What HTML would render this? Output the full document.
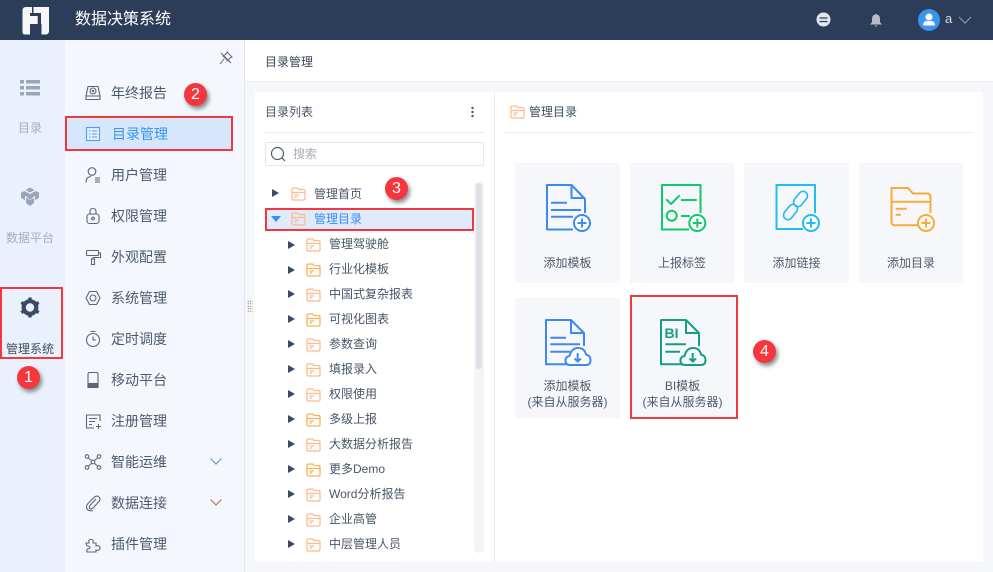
<!DOCTYPE html>
<html lang="zh"><head><meta charset="utf-8"><title>数据决策系统</title>
<style>
*{box-sizing:border-box;margin:0;padding:0}
html,body{width:993px;height:572px;overflow:hidden;background:#f6f7fa}
body{position:relative;font-family:"Liberation Sans","Noto Sans CJK SC",sans-serif;color:#4a5568}
.a{position:absolute}
.t{position:absolute;white-space:nowrap;line-height:16px;font-size:12px;color:#4a5568}
.m{position:absolute;left:111px;white-space:nowrap;font-size:14px;line-height:18px;color:#4d5a6e}
.mi{position:absolute;left:84px;width:18px;height:18px;fill:none;stroke:#5a6678;stroke-width:1.1}
.tri{position:absolute;width:0;height:0;border-left:7px solid #3a4a68;border-top:4.5px solid transparent;border-bottom:4.5px solid transparent}
.fd{position:absolute;width:15px;height:14px;fill:none;stroke:#fdbb8e;stroke-width:1.3}
.o{stroke:#fcb255}
.card{position:absolute;width:105px;height:120px;background:#f6f7fa}
.card svg{position:absolute;left:0;top:0;width:105px;height:120px;fill:none;stroke-width:2}
.card div{position:absolute;left:0;width:100%;text-align:center;font-size:12px;line-height:16px;color:#4d5a6e;white-space:nowrap}
.red{position:absolute;border:2px solid #f0383f}
.badge{position:absolute;width:23px;height:23px;border-radius:50%;background:#f5373d;color:#fff;font-size:16px;line-height:23px;text-align:center;box-shadow:2px 3px 4px rgba(0,0,0,.45)}
</style></head><body>
<svg width="0" height="0" style="position:absolute"><symbol id="f" viewBox="0 0 15 14"><path d="M1 2.500Q1 1 2.500 1H6.500L8 2.500H12.500Q14 2.500 14 4V11.500Q14 13 12.500 13H2.500Q1 13 1 11.500ZM1 5.500H14M3.500 8H8M3.500 10H6"/></symbol></svg>

<div class="a" style="left:0;top:0;width:993px;height:40px;background:#2c3d59"></div>
<svg class="a" style="left:15px;top:2px" width="40" height="36" viewBox="15 2 40 36"><path d="M26 7H32V13H41.500V24H30V34.500H25Q22.500 34.500 22.500 32V10.500Q22.500 7 26 7ZM33.500 7H49V31Q49 34.500 45.500 34.500H41.500V24H41.500V13H33.500Z" fill="#f6f6f6"/><path d="M30 13H41V24H37.700V16H30Z" fill="#2c3d59"/></svg>
<div class="t" style="left:75px;top:11px;font-size:16px;line-height:18px;color:#fff">数据决策系统</div>
<svg class="a" style="left:816px;top:12px" width="15" height="15" viewBox="0 0 15 15"><circle cx="7.500" cy="7.500" r="7" fill="#e3e6ec"/><path d="M3.500 6H11.500M3.500 9.500H11.500" stroke="#2c3d59" stroke-width="1.300"/></svg>
<svg class="a" style="left:869px;top:13px" width="14" height="15" viewBox="0 0 14 15"><path d="M7 1Q11 2 11 6V9L13 11.500H1L3 9V6Q3 2 7 1ZM5.500 12.500H8.500L7 14Z" fill="#b6bcc6"/></svg>
<svg class="a" style="left:918px;top:9px" width="22" height="22" viewBox="0 0 22 22"><circle cx="11" cy="11" r="11" fill="#3a95ee"/><circle cx="11" cy="8" r="3.500" fill="#fff"/><path d="M5 16.500Q5 12 9 12H13Q17 12 17 16.500Z" fill="#fff"/></svg>
<div class="t" style="left:945px;top:11px;font-size:13px;color:#d6dae2">a</div>
<svg class="a" style="left:958px;top:15px" width="14" height="10" viewBox="0 0 14 10"><path d="M1 2L7 8L13 2" fill="none" stroke="#8e99aa" stroke-width="1.200"/></svg>

<div class="a" style="left:0;top:40px;width:65px;height:532px;background:#ebf1fc"></div>
<div class="a" style="left:65px;top:40px;width:179px;height:532px;background:#f4f7fe"></div>
<div class="a" style="left:244px;top:40px;width:1px;height:532px;background:#e3e6ec"></div>

<svg class="a" style="left:20px;top:80px" width="20" height="16" viewBox="0 0 20 16" fill="#9aa5b8"><rect width="4" height="3.500"/><rect x="6" width="14" height="3.500"/><rect y="6" width="4" height="3.500"/><rect x="6" y="6" width="14" height="3.500"/><rect y="12" width="4" height="3.500"/><rect x="6" y="12" width="14" height="3.500"/></svg>
<div class="t" style="left:18px;top:120px;color:#a3adbc">目录</div>
<svg class="a" style="left:20px;top:187px" width="20" height="21" viewBox="0 0 20 21" fill="#9aa5b8"><path d="M10 0.500L14.500 3L10 5.500L5.500 3ZM1 5.500L4.500 4L9 6.500V11L5 9V13L1 11ZM19 5.500L15.500 4L11 6.500V11L15 9V13L19 11ZM6 11L10 13L14 11V16L10 19L6 16Z"/><circle cx="10" cy="9.500" r="2.800"/></svg>
<div class="t" style="left:6px;top:230px;color:#a3adbc">数据平台</div>
<svg class="a" style="left:20px;top:297px" width="20" height="21" viewBox="0 0 20 21"><circle cx="10" cy="10.500" r="6.300" fill="none" stroke="#3a4a64" stroke-width="4.200"/><g stroke="#3a4a64" stroke-width="3.400"><path d="M10 0.500V3.500M10 17.500V20.500M1.300 5.500L4 7M16 14L18.700 15.500M1.300 15.500L4 14M16 7L18.700 5.500"/></g></svg>
<div class="t" style="left:6px;top:341px;color:#3f4c62">管理系统</div>
<div class="red" style="left:0;top:287px;width:63px;height:72px"></div>

<svg class="a" style="left:219px;top:51px" width="14" height="14" viewBox="0 0 14 14" fill="none" stroke="#5e6a7c" stroke-width="1"><path d="M8 1L13 6L11 7L9 10L4 5L7 3ZM5 8L1 13M2 2L12 12"/></svg>

<div class="a" style="left:65px;top:116px;width:168px;height:35px;background:#d6e6fb;border:2px solid #f0383f"></div>

<svg class="mi" style="top:84px" viewBox="0 0 18 18"><path d="M4 2.500H14L16 12V15.500H2V12ZM2.500 12H15.500"/><circle cx="9" cy="7" r="3"/><circle cx="9" cy="7" r=".7"/></svg>
<div class="m" style="top:84px">年终报告</div>
<svg class="mi" style="top:125px;stroke:#55a0ee" viewBox="0 0 18 18"><rect x="2.500" y="2.500" width="13" height="13" fill="#e3eefc"/><path d="M5 6H6.500M8 6H13M5 9H6.500M8 9H13M5 12H6.500M8 12H13"/></svg>
<div class="m" style="top:125px;color:#3a95f0;left:112px">目录管理</div>
<svg class="mi" style="top:166px" viewBox="0 0 18 18"><circle cx="8" cy="5.500" r="3.800"/><path d="M2 16.500Q2 11 7 10.500M11 12H16M11 14H16M11 16H16"/></svg>
<div class="m" style="top:166px">用户管理</div>
<svg class="mi" style="top:207px" viewBox="0 0 18 18"><rect x="3" y="7" width="12" height="9.500" rx="2.500"/><path d="M6 7V4.500Q6 1.500 9 1.500Q12 1.500 12 4.500V7"/><circle cx="9" cy="11.500" r="1.300"/></svg>
<div class="m" style="top:207px">权限管理</div>
<svg class="mi" style="top:248px" viewBox="0 0 18 18"><rect x="2.500" y="2.500" width="12" height="5" rx="1"/><path d="M14.500 5H16.500V9.500H9V11"/><rect x="7.500" y="11" width="3" height="5.500"/></svg>
<div class="m" style="top:248px">外观配置</div>
<svg class="mi" style="top:289px" viewBox="0 0 18 18"><path d="M5.500 2.500H12.500L16 9L12.500 15.500H5.500L2 9Z" stroke-linejoin="round"/><circle cx="9" cy="9" r="3"/></svg>
<div class="m" style="top:289px">系统管理</div>
<svg class="mi" style="top:330px" viewBox="0 0 18 18"><circle cx="9" cy="10" r="6.500"/><path d="M6.500 1.500H11.500M9 6.500V10H12"/></svg>
<div class="m" style="top:330px">定时调度</div>
<svg class="mi" style="top:371px" viewBox="0 0 18 18"><rect x="4" y="1.500" width="10" height="15" rx="1.500"/><rect x="4" y="12.500" width="10" height="4" fill="#5a6678"/></svg>
<div class="m" style="top:371px">移动平台</div>
<svg class="mi" style="top:412px" viewBox="0 0 18 18"><path d="M16 9V3H2.500V16H10M5 6.500H13M5 9.500H11M5 12.500H8M12 14.500H17M14.500 12V17"/></svg>
<div class="m" style="top:412px">注册管理</div>
<svg class="mi" style="top:453px" viewBox="0 0 18 18"><circle cx="3" cy="3.500" r="1.800"/><circle cx="15" cy="3.500" r="1.800"/><circle cx="3" cy="14.500" r="1.800"/><circle cx="15" cy="14.500" r="1.800"/><circle cx="9" cy="9" r="1.800"/><path d="M4.500 5L7.500 7.500M13.500 5L10.500 7.500M4.500 13L7.500 10.500M13.500 13L10.500 10.500"/></svg>
<div class="m" style="top:453px">智能运维</div>
<svg class="mi" style="top:494px" viewBox="0 0 18 18"><path d="M12 5L6 11.500Q4.500 13.500 6 14.500Q7.500 15.500 9 14L15 7.500Q17 5 15 3Q13 1.200 10.500 3L4 9.500Q1.500 12.500 3 15Q5 17.500 9 16.500"/></svg>
<div class="m" style="top:494px">数据连接</div>
<svg class="mi" style="top:535px" viewBox="0 0 18 18"><path d="M2 8H5Q4 4.500 7 4.500Q10 4.500 9 8H12V11Q16 10 16 13Q16 16 12 15V17H3V14Q6 14 6 12.500Q6 11 3 11Z"/></svg>
<div class="m" style="top:535px">插件管理</div>
<svg class="a" style="left:209px;top:457px" width="14" height="9" viewBox="0 0 14 9"><path d="M1.500 1.500L7 7L12.500 1.500" fill="none" stroke="#6f9bcb" stroke-width="1.200"/></svg>
<svg class="a" style="left:209px;top:498px" width="14" height="9" viewBox="0 0 14 9"><path d="M1.500 1.500L7 7L12.500 1.500" fill="none" stroke="#b5715f" stroke-width="1.200"/></svg>

<div class="a" style="left:245px;top:40px;width:748px;height:42px;background:#fff;border-bottom:1px solid #e8eaee"></div>
<div class="t" style="left:265px;top:54px;color:#3a465a">目录管理</div>

<div class="a" style="left:247px;top:300px;width:6px;height:13px;background-image:radial-gradient(#a08a80 .6px,transparent .7px);background-size:2.500px 2.500px"></div>
<div class="a" style="left:497px;top:320px;width:6px;height:13px;background-image:radial-gradient(#c2705e .6px,transparent .7px);background-size:2.500px 2.500px"></div>

<div class="a" style="left:255px;top:92px;width:239px;height:470px;background:#fff"></div>
<div class="a" style="left:494px;top:92px;width:1px;height:470px;background:#e6e8ec"></div>
<div class="a" style="left:495px;top:92px;width:488px;height:470px;background:#fff"></div>

<div class="t" style="left:265px;top:104px">目录列表</div>
<svg class="a" style="left:470px;top:106px" width="5" height="12"><circle cx="2.500" cy="2" r="1.200" fill="#4a5a76"/><circle cx="2.500" cy="6" r="1.200" fill="#4a5a76"/><circle cx="2.500" cy="10" r="1.200" fill="#4a5a76"/></svg>
<div class="a" style="left:265px;top:132px;width:219px;height:1px;background:#e8eaee"></div>
<div class="a" style="left:265px;top:142px;width:219px;height:24px;border:1px solid #e4e6ea;border-radius:2px"></div>
<svg class="a" style="left:270px;top:146px" width="17" height="17" viewBox="0 0 17 17" fill="none" stroke="#4d5a6e" stroke-width="1.200"><circle cx="7.500" cy="7.500" r="6"/><path d="M11.800 11.800L15 15"/></svg>
<div class="t" style="left:293px;top:146px;color:#a8aeb8">搜索</div>

<div class="a" style="left:474px;top:182px;width:10px;height:371px;background:#f4f4f6;border-radius:5px"></div>
<div class="a" style="left:476px;top:183px;width:6px;height:186px;background:#dfe0e5;border-radius:3px"></div>

<div class="a" style="left:265px;top:208px;width:209px;height:23px;background:#dfeafb;border:2px solid #f0383f"></div>

<div class="tri" style="left:272px;top:189px"></div>
<svg class="fd" style="left:291px;top:187px"><use href="#f"/></svg>
<div class="t" style="left:314px;top:186px">管理首页</div>
<div class="a" style="left:271px;top:216px;width:0;height:0;border-top:6px solid #3a8fee;border-left:5px solid transparent;border-right:5px solid transparent"></div>
<svg class="fd" style="left:291px;top:212px"><use href="#f"/></svg>
<div class="t" style="left:314px;top:211px;color:#3a8fee">管理目录</div>

<div class="tri" style="left:288px;top:241px"></div><svg class="fd" style="left:306px;top:238px"><use href="#f"/></svg><div class="t" style="left:329px;top:236px">管理驾驶舱</div>
<div class="tri" style="left:288px;top:266px"></div><svg class="fd o" style="left:306px;top:263px"><use href="#f"/></svg><div class="t" style="left:329px;top:261px">行业化模板</div>
<div class="tri" style="left:288px;top:290px"></div><svg class="fd" style="left:306px;top:288px"><use href="#f"/></svg><div class="t" style="left:329px;top:286px">中国式复杂报表</div>
<div class="tri" style="left:288px;top:315px"></div><svg class="fd o" style="left:306px;top:313px"><use href="#f"/></svg><div class="t" style="left:329px;top:311px">可视化图表</div>
<div class="tri" style="left:288px;top:340px"></div><svg class="fd" style="left:306px;top:338px"><use href="#f"/></svg><div class="t" style="left:329px;top:336px">参数查询</div>
<div class="tri" style="left:288px;top:365px"></div><svg class="fd" style="left:306px;top:363px"><use href="#f"/></svg><div class="t" style="left:329px;top:361px">填报录入</div>
<div class="tri" style="left:288px;top:390px"></div><svg class="fd" style="left:306px;top:388px"><use href="#f"/></svg><div class="t" style="left:329px;top:386px">权限使用</div>
<div class="tri" style="left:288px;top:415px"></div><svg class="fd o" style="left:306px;top:413px"><use href="#f"/></svg><div class="t" style="left:329px;top:411px">多级上报</div>
<div class="tri" style="left:288px;top:440px"></div><svg class="fd" style="left:306px;top:438px"><use href="#f"/></svg><div class="t" style="left:329px;top:436px">大数据分析报告</div>
<div class="tri" style="left:288px;top:465px"></div><svg class="fd o" style="left:306px;top:463px"><use href="#f"/></svg><div class="t" style="left:329px;top:461px">更多Demo</div>
<div class="tri" style="left:288px;top:490px"></div><svg class="fd" style="left:306px;top:488px"><use href="#f"/></svg><div class="t" style="left:329px;top:486px">Word分析报告</div>
<div class="tri" style="left:288px;top:515px"></div><svg class="fd" style="left:306px;top:513px"><use href="#f"/></svg><div class="t" style="left:329px;top:511px">企业高管</div>
<div class="tri" style="left:288px;top:540px"></div><svg class="fd" style="left:306px;top:538px"><use href="#f"/></svg><div class="t" style="left:329px;top:536px">中层管理人员</div>

<svg class="fd" style="left:510px;top:105px"><use href="#f"/></svg>
<div class="t" style="left:529px;top:104px;color:#3f4c62">管理目录</div>
<div class="a" style="left:505px;top:132px;width:468px;height:1px;background:#e8eaee"></div>

<div class="card" style="left:515px;top:163px"><svg viewBox="0 0 105 120" stroke="#3c89f2"><path d="M58 66.500H32V22H56.500L70 36V50M56.500 22V35H70M36 39.700H52M36 47H66M36 53.700H58" stroke-linejoin="round"/><circle cx="67" cy="60" r="8" fill="#fff"/><path d="M67 55.500V64.500M62.500 60H71.500"/></svg><div style="top:92px">添加模板</div></div>
<div class="card" style="left:630px;top:163px;width:104px"><svg viewBox="0 0 105 120" stroke="#10c96b"><path d="M59 66.500H32V22H70.500V50M36.300 36.300L41 41L49.700 32.300M51 37H66.700M51 53H60" stroke-linejoin="round"/><circle cx="41.700" cy="52.700" r="5"/><circle cx="67.300" cy="60" r="8" fill="#fff"/><path d="M67.300 55.500V64.500M62.800 60H71.800"/></svg><div style="top:92px">上报标签</div></div>
<div class="card" style="left:744px;top:163px"><svg viewBox="0 0 105 120" stroke="#21bdf0"><path d="M59 66H32.500V22H71V50" stroke-linejoin="round"/><rect x="52" y="27.500" width="9" height="17" rx="4.500" transform="rotate(38 56.500 36)" stroke-width="1.600"/><rect x="42" y="40.500" width="9" height="17" rx="4.500" transform="rotate(38 46.500 49)" stroke-width="1.600"/><circle cx="67" cy="60" r="8" fill="#fff"/><path d="M67 55.500V64.500M62.500 60H71.500"/></svg><div style="top:92px">添加链接</div></div>
<div class="card" style="left:859px;top:163px;width:104px"><svg viewBox="0 0 105 120" stroke="#fca93a"><path d="M59 62.300H36Q32.500 62.300 32.500 59V25H49L54 30.500H68Q71.500 30.500 71.500 34V50M32.500 38.700H71.500M36.700 45.700H47.700M36.700 51.700H41.700"/><circle cx="67" cy="60" r="8" fill="#fff"/><path d="M67 55.500V64.500M62.500 60H71.500"/></svg><div style="top:92px">添加目录</div></div>
<div class="card" style="left:515px;top:298px"><svg viewBox="0 0 105 120" stroke="#3c89f2"><path d="M52 66.300H31V22H56L69 35V48M56 22V35H69M35.300 39.700H51M35.300 46.300H65M35.300 53.700H55" stroke-linejoin="round"/><path d="M55 67Q50.500 67 50.500 62.500Q50.500 58.500 54.500 58Q56.500 50 63 50Q69.500 50 71 56.500Q75.500 57.500 75.500 62Q75.500 67 71 67Z" fill="#fff"/><path d="M62.700 55V63.500M59.500 60.500L62.700 63.500L66 60.500"/></svg><div style="top:80px">添加模板</div><div style="top:96px">(来自从服务器)</div></div>
<div class="card" style="left:630px;top:298px"><svg viewBox="0 0 105 120" stroke="#14a07e"><path d="M52 66.300H31V22H56L69 35V48M56 22V35H69M35.300 46.300H56M35.300 53.700H50" stroke-linejoin="round"/><text x="34.500" y="40" font-family="Liberation Sans" font-size="14" font-weight="700" fill="#14a07e" stroke="none">BI</text><path d="M55 67Q50.500 67 50.500 62.500Q50.500 58.500 54.500 58Q56.500 50 63 50Q69.500 50 71 56.500Q75.500 57.500 75.500 62Q75.500 67 71 67Z" fill="#f6f7fa"/><path d="M62.700 55V63.500M59.500 60.500L62.700 63.500L66 60.500"/></svg><div style="top:80px">BI模板</div><div style="top:96px">(来自从服务器)</div></div>
<div class="red" style="left:630px;top:295px;width:108px;height:124px"></div>

<div class="badge" style="left:184px;top:83px">2</div>
<div class="badge" style="left:17px;top:366px">1</div>
<div class="badge" style="left:385px;top:177px">3</div>
<div class="badge" style="left:753px;top:340px">4</div>
</body></html>
